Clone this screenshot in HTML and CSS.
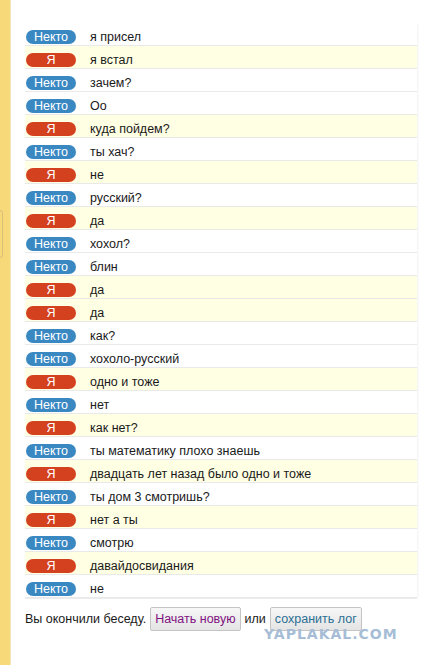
FILE: index.html
```html
<!DOCTYPE html>
<html>
<head>
  <meta charset="utf-8">
  <title>Чат</title>
  <link rel="stylesheet" href="styles.css">
</head>
<body>
  <div class="side"><span class="side-tab"></span></div>

  <div class="chat">
    <div class="log">
      <div class="msg"><span class="who who-them">Некто</span><span class="text">я присел</span></div>
      <div class="msg mine"><span class="who who-me">Я</span><span class="text">я встал</span></div>
      <div class="msg"><span class="who who-them">Некто</span><span class="text">зачем?</span></div>
      <div class="msg"><span class="who who-them">Некто</span><span class="text">Оо</span></div>
      <div class="msg mine"><span class="who who-me">Я</span><span class="text">куда пойдем?</span></div>
      <div class="msg"><span class="who who-them">Некто</span><span class="text">ты хач?</span></div>
      <div class="msg mine"><span class="who who-me">Я</span><span class="text">не</span></div>
      <div class="msg"><span class="who who-them">Некто</span><span class="text">русский?</span></div>
      <div class="msg mine"><span class="who who-me">Я</span><span class="text">да</span></div>
      <div class="msg"><span class="who who-them">Некто</span><span class="text">хохол?</span></div>
      <div class="msg"><span class="who who-them">Некто</span><span class="text">блин</span></div>
      <div class="msg mine"><span class="who who-me">Я</span><span class="text">да</span></div>
      <div class="msg mine"><span class="who who-me">Я</span><span class="text">да</span></div>
      <div class="msg"><span class="who who-them">Некто</span><span class="text">как?</span></div>
      <div class="msg"><span class="who who-them">Некто</span><span class="text">хохоло-русский</span></div>
      <div class="msg mine"><span class="who who-me">Я</span><span class="text">одно и тоже</span></div>
      <div class="msg"><span class="who who-them">Некто</span><span class="text">нет</span></div>
      <div class="msg mine"><span class="who who-me">Я</span><span class="text">как нет?</span></div>
      <div class="msg"><span class="who who-them">Некто</span><span class="text">ты математику плохо знаешь</span></div>
      <div class="msg mine"><span class="who who-me">Я</span><span class="text">двадцать лет назад было одно и тоже</span></div>
      <div class="msg"><span class="who who-them">Некто</span><span class="text">ты дом 3 смотришь?</span></div>
      <div class="msg mine"><span class="who who-me">Я</span><span class="text">нет а ты</span></div>
      <div class="msg"><span class="who who-them">Некто</span><span class="text">смотрю</span></div>
      <div class="msg mine"><span class="who who-me">Я</span><span class="text">давайдосвидания</span></div>
      <div class="msg"><span class="who who-them">Некто</span><span class="text">не</span></div>
    </div>

    <div class="ended">
      <span>Вы окончили беседу.</span>
      <button class="btn btn-new">Начать новую</button>
      <span>или</span>
      <button class="btn btn-save">сохранить лог</button>
    </div>

    <div class="mark">YAPLAKAL.COM</div>
  </div>
</body>
</html>
```

FILE: styles.css
```css
* {
  box-sizing: border-box;
  margin: 0;
  padding: 0;
}

body {
  font-family: 'Liberation Sans', Arial, sans-serif;
  font-size: 12.5px;
  color: #1a1a1a;
  background: #fff;
  width: 426px;
  height: 665px;
  display: flex;
  overflow: hidden;
}

.side {
  width: 11px;
  flex: none;
  background: #f8d97a;
  border-right: 1px solid #f4e7b8;
  position: relative;
}

.side-tab {
  position: absolute;
  left: 0;
  top: 210px;
  width: 3px;
  height: 48px;
  border: 1px solid #d9c07a;
  border-left: none;
  border-radius: 0 3px 3px 0;
}

.chat {
  flex: 1;
  padding: 23px 9px 0 14px;
  position: relative;
}

.log {
  border-bottom: 1px solid #ececec;
  box-shadow: 2px 0 2px -1px #f2f2f2;
}

.msg {
  height: 23px;
  display: flex;
  align-items: flex-end;
  padding: 0 0 1px 1px;
  border-bottom: 1px solid #e9e9e9;
}

.msg.mine {
  background: #ffffe4;
}

.who {
  width: 50px;
  height: 14px;
  border-radius: 7px;
  color: #fff;
  font-size: 12.5px;
  line-height: 14px;
  text-align: center;
  flex: none;
}

.who-them {
  background: #3a88c2;
}

.who-me {
  background: #d3411f;
}

.text {
  margin-left: 14px;
  line-height: 14px;
}

.ended {
  display: flex;
  align-items: center;
  gap: 4px;
  margin-top: 8px;
}

.btn {
  font-family: inherit;
  font-size: 12.5px;
  height: 24px;
  padding: 0 4px;
  border: 1px solid #c4c4c4;
  border-radius: 2px;
  background: linear-gradient(#f7f7f7, #e4e4e4);
}

.btn-new {
  color: #80127f;
}

.btn-save {
  color: #2b6f93;
}

.mark {
  position: absolute;
  left: 253px;
  top: 626px;
  font-family: 'DejaVu Sans', sans-serif;
  font-weight: bold;
  font-size: 14px;
  letter-spacing: 1px;
  color: #a6bdd5;
}
```
